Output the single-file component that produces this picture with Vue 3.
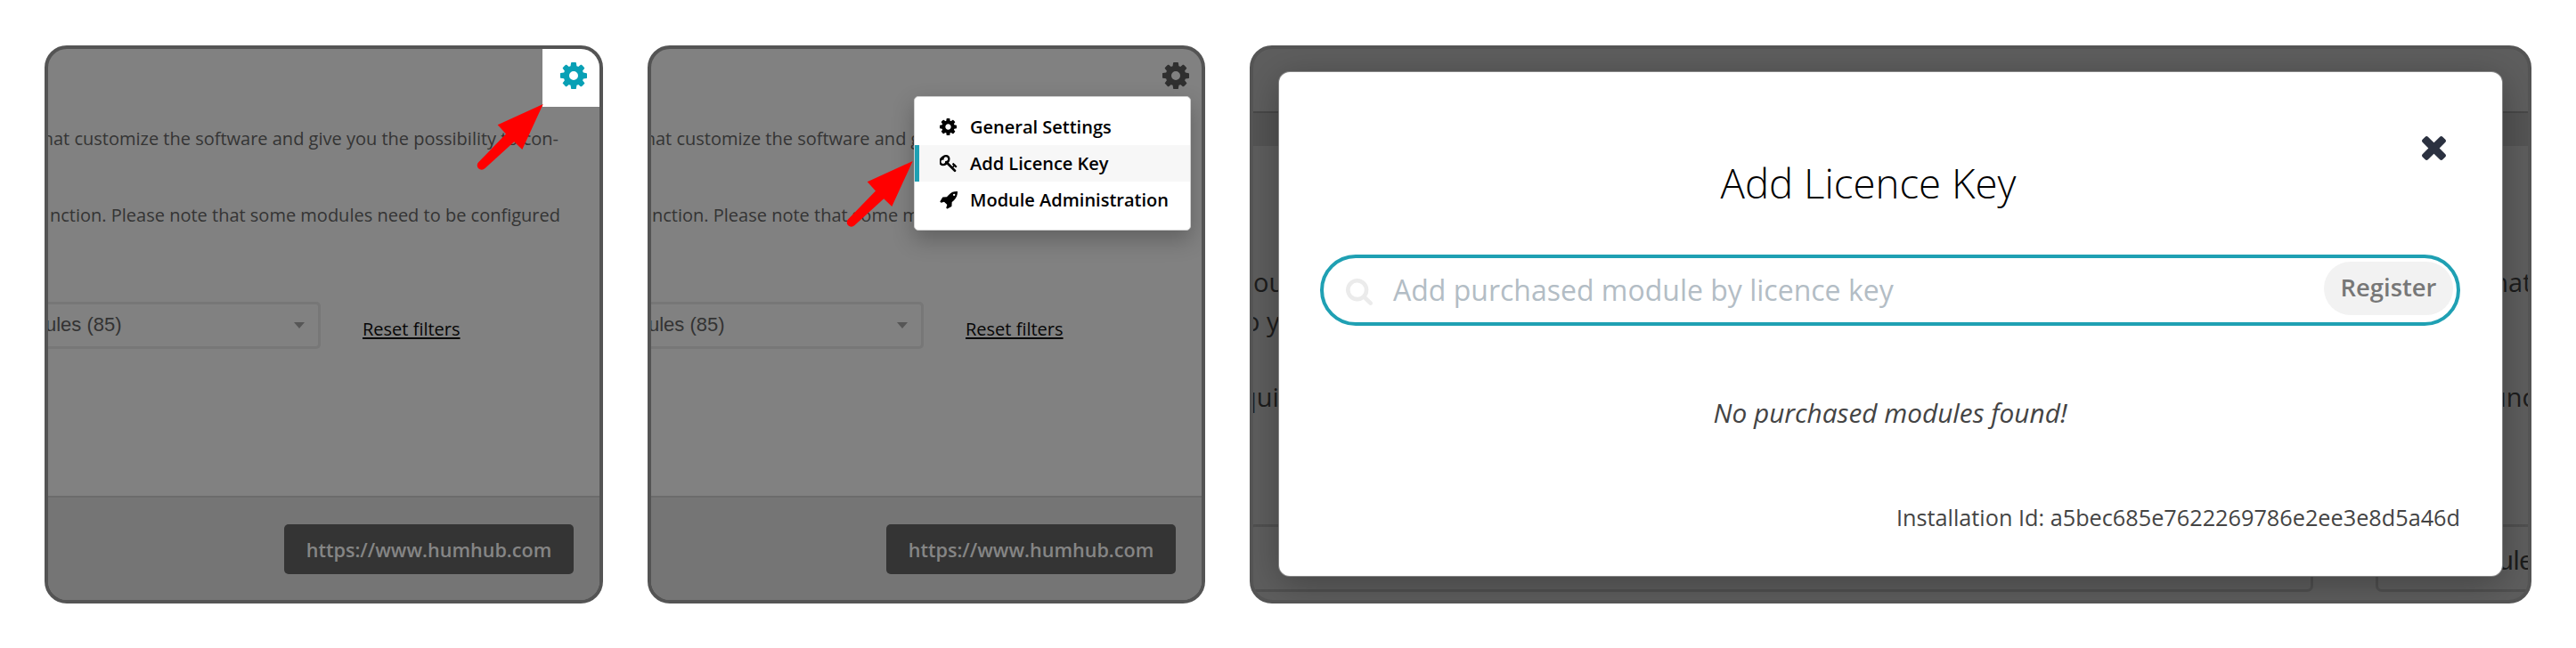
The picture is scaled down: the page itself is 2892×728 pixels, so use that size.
<script setup>
const icons = {
  cog: {
    box: '128 128 1536 1536',
    d: 'M1152 896q0-106-75-181t-181-75-181 75-75 181 75 181 181 75 181-75 75-181zm512-109v222q0 12-8 23t-20 13l-185 28q-19 54-39 91 35 50 107 138 10 12 10 25t-9 23q-27 37-99 108t-94 71q-12 0-26-9l-138-108q-44 23-91 38-16 136-29 186-7 28-36 28h-222q-14 0-24.500-8.500t-11.500-21.500l-28-184q-49-16-90-37l-141 107q-10 9-25 9-14 0-25-11-126-114-165-168-7-10-7-23 0-12 8-23 15-21 51-66.500t54-70.500q-27-50-41-99l-183-27q-13-2-21-12.500t-8-23.500v-222q0-12 8-23t19-13l186-28q14-46 39-92-40-57-107-138-10-12-10-24 0-10 9-23 26-36 98.500-107.500t94.500-71.500q13 0 26 10l138 107q44-23 91-38 16-136 29-186 7-28 36-28h222q14 0 24.500 8.500t11.500 21.500l28 184q49 16 90 37l142-107q9-9 24-9 13 0 25 10 129 119 165 170 7 8 7 22 0 12-8 23-15 21-51 66.500t-54 70.500q26 50 41 98l183 28q13 2 21 12.500t8 23.500z',
  },
  key: {
    box: '64 128 1664 1664',
    d: 'M832 512q0-80-56-136t-136-56-136 56-56 136q0 42 19 83-41-19-83-19-80 0-136 56t-56 136 56 136 136 56 136-56 56-136q0-42-19-83 41 19 83 19 80 0 136-56t56-136zm851 704q0 17-49 66t-66 49q-9 0-28.500-16t-36.500-33-38.500-40-24.500-26l-96 96 220 220q28 28 28 68 0 42-39 81t-81 39q-40 0-68-28l-671-671q-176 131-365 131-163 0-265.500-102.500t-102.500-265.500q0-160 95-313t248-248 313-95q163 0 265.500 102.500t102.500 265.500q0 189-131 365l355 355 96-96q-3-3-26-24.500t-40-38.500-33-36.500-16-28.500q0-17 49-66t66-49q13 0 23 10 6 6 46 44.500t82 79.500 86.500 86 73 78 28.500 41z',
  },
  rocket: {
    box: '0 128 1664 1664',
    d: 'M1440 448q0-40-28-68t-68-28-68 28-28 68 28 68 68 28 68-28 28-68zm224-288q0 249-75.500 430.500t-253.500 360.500q-81 80-195 176l-20 379q-2 16-16 26l-384 224q-7 4-16 4-12 0-23-9l-64-64q-13-14-8-32l85-276-281-281-276 85q-3 1-9 1-14 0-23-9l-64-64q-17-19-5-39l224-384q10-14 26-16l379-20q96-114 176-195 188-187 358-258t431-71q14 0 24 9.500t10 22.500z',
  },
  search: {
    box: '64 128 1664 1664',
    d: 'M1216 832q0-185-131.500-316.500t-316.500-131.500-316.500 131.500-131.500 316.500 131.500 316.500 316.500 131.500 316.500-131.500 131.500-316.500zm512 832q0 52-38 90t-90 38q-54 0-90-38l-343-342q-179 124-399 124-143 0-273.500-55.500t-225-150-150-225-55.500-273.500 55.500-273.500 150-225 225-150 273.500-55.500 273.500 55.500 225 150 150 225 55.500 273.500q0 220-124 399l343 343q37 37 37 90z',
  },
  times: {
    box: '302 366 1188 1188',
    d: 'M1490 1322q0 40-28 68l-136 136q-28 28-68 28t-68-28l-294-294-294 294q-28 28-68 28t-68-28l-136-136q-28-28-28-68t28-68l294-294-294-294q-28-28-28-68t28-68l136-136q28-28 68-28t68 28l294 294 294-294q28-28 68-28t68 28l136 136q28 28 28 68t-28 68l-294 294 294 294q28 28 28 68z',
  },
}

const steps = [
  { id: 'gear', menuOpen: false },
  { id: 'menu', menuOpen: true },
]

const menu = [
  { icon: 'cog', label: 'General Settings', active: false },
  { icon: 'key', label: 'Add Licence Key', active: true },
  { icon: 'rocket', label: 'Module Administration', active: false },
]
</script>

<template>
  <main class="strip">
    <section v-for="step in steps" :key="step.id" class="panel step" :class="'step-' + step.id">
      <p class="line first">hat customize the software and give you the possibility to con-</p>
      <p class="line">nction. Please note that some modules need to be configured</p>
      <div class="filters">
        <div class="select"><span>ules (85)</span><i class="caret"></i></div>
        <a class="reset">Reset filters</a>
      </div>
      <footer class="foot"><span class="url">https://www.humhub.com</span></footer>

      <div class="gearbox">
        <svg class="gear" :viewBox="icons.cog.box"><path :d="icons.cog.d" /></svg>
      </div>

      <ul v-if="step.menuOpen" class="menu">
        <li v-for="item in menu" :key="item.label" :class="{ active: item.active }">
          <svg class="mi" :class="item.icon" :viewBox="icons[item.icon].box"><path :d="icons[item.icon].d" /></svg>
          <span>{{ item.label }}</span>
        </li>
      </ul>

      <svg class="arrow" viewBox="0 0 76 76">
        <path d="M74.700 1L51.300 52L42.200 43.200L9.300 73.300A5 5 0 0 1 2.200 66.200L33 34.500L23.700 24.300Z" />
      </svg>
    </section>

    <section class="panel dialog">
      <div class="band"></div>
      <div class="peek p1"><span>ou</span><span class="r">hat</span></div>
      <div class="peek p2"><span>o y</span></div>
      <div class="peek p3"><span>qui</span><span class="r">unc</span></div>
      <div class="boxes">
        <div class="box wide"></div>
        <div class="box rest">ule</div>
      </div>

      <div class="modal">
        <div class="close">
          <svg :viewBox="icons.times.box"><path :d="icons.times.d" /></svg>
        </div>
        <h1>Add Licence Key</h1>
        <div class="field">
          <svg class="search" :viewBox="icons.search.box"><path :d="icons.search.d" /></svg>
          <span class="placeholder">Add purchased module by licence key</span>
          <span class="register">Register</span>
        </div>
        <p class="empty">No purchased modules found!</p>
        <p class="install">Installation Id: a5bec685e7622269786e2ee3e8d5a46d</p>
      </div>
    </section>
  </main>
</template>

<style>
body {
  margin: 0;
  background: #fff;
}
</style>

<style scoped>
* {
  box-sizing: border-box;
}
p,
h1,
ul {
  margin: 0;
  padding: 0;
}
.strip {
  display: flex;
  gap: 50px;
  width: 2892px;
  height: 728px;
  padding: 50.5px 0 0 50px;
  font-family: 'Open Sans', 'Noto Sans', sans-serif;
  background: #fff;
}
.panel {
  position: relative;
  flex: none;
  height: 627px;
  border: 4px solid #545454;
  border-radius: 25px;
  overflow: hidden;
}
.step {
  display: flex;
  flex-direction: column;
  width: 627px;
  background: #818181;
}
.step-menu {
  width: 626px;
}

/* dimmed page */
.line {
  display: flex;
  justify-content: flex-end;
  margin-bottom: 59px;
  padding-right: 44px;
  font-size: 20px;
  line-height: 27px;
  white-space: nowrap;
  color: #343434;
}
.line.first {
  margin-top: 87px;
  padding-right: 46px;
}
.filters {
  display: flex;
  align-items: center;
  margin-top: 25px;
}
.select {
  display: flex;
  align-items: center;
  justify-content: space-between;
  width: 311px;
  height: 53px;
  margin-left: -5px;
  padding: 0 15px 0 0;
  border: 3px solid #777;
  border-radius: 5px;
  font-family: 'Liberation Sans', Arial, sans-serif;
  font-size: 22px;
  color: #333;
}
.select span {
  margin-left: -1px;
}
.caret {
  border: 6px solid transparent;
  border-top: 7px solid #565656;
  border-bottom: 0;
}
.reset {
  margin: 8px 0 0 47px;
  font-size: 20px;
  line-height: 27px;
  color: #060606;
  text-decoration: underline;
  text-decoration-thickness: 2px;
  text-underline-offset: 2px;
}
.foot {
  display: flex;
  justify-content: flex-end;
  align-items: flex-start;
  margin-top: auto;
  height: 116.500px;
  padding: 30px 29px 0 0;
  border-top: 2px solid #6c6c6c;
  background: #757575;
}
.url {
  width: 325px;
  height: 56px;
  border-radius: 5px;
  background: #343434;
  color: #858585;
  font-size: 21.600px;
  font-weight: 600;
  line-height: 57px;
  text-align: center;
}
.gearbox {
  position: absolute;
  top: 0;
  right: 0;
  width: 64.500px;
  height: 65.500px;
  padding: 15.500px 0 0 20.500px;
}
.gear {
  display: block;
  width: 30px;
  height: 30px;
  fill: #2f2f2f;
}
.step-gear .gearbox {
  background: #fff;
}
.step-gear .gear {
  fill: #08a0b5;
}
.arrow {
  position: absolute;
  left: 481px;
  top: 61.500px;
  width: 76px;
  height: 76px;
  fill: #f00;
}
.step-menu .arrow {
  left: 219px;
  top: 125.500px;
}

/* dropdown */
.menu {
  position: absolute;
  left: 295px;
  top: 53px;
  width: 311px;
  height: 151px;
  padding: 13.500px 0;
  border-radius: 5px;
  background: #fff;
  border: 1px solid #d0d0d0;
  box-shadow: 0 10px 24px rgba(0, 0, 0, 0.25);
  list-style: none;
}
.menu li {
  display: flex;
  align-items: center;
  height: 41px;
  padding-left: 23px;
  border-left: 5px solid transparent;
  font-size: 20px;
  font-weight: 600;
  line-height: 41px;
  color: #000;
  white-space: nowrap;
}
.menu li.active {
  border-left-color: #1fa0b3;
  background: #f7f7f7;
}
.mi {
  flex: none;
  width: 20px;
  height: 20px;
  margin-right: 14px;
}
.mi.cog {
  width: 19px;
  height: 19px;
  margin-right: 15px;
}

/* dialog */
.dialog {
  width: 1438.500px;
  background: #5e5e5e;
}
.band {
  margin-top: 70.500px;
  height: 39px;
  border-top: 2px solid #484848;
  background: #545454;
}
.peek {
  display: flex;
  justify-content: space-between;
  height: 43px;
  font-size: 29px;
  line-height: 43px;
  color: #1c1c1c;
}
.p1 {
  margin-top: 131px;
}
.p1 .r {
  margin-right: -5px;
}
.p2 span {
  margin: 1px 0 0 -10px;
}
.p3 {
  margin-top: 43px;
}
.p3 span {
  margin-left: -14px;
}
.p3 .r {
  margin-right: -8px;
}
.boxes {
  display: flex;
  gap: 70px;
  margin-top: 122px;
}
.box {
  flex: none;
  height: 76px;
  border: 3px solid #505050;
  border-radius: 7px;
}
.wide {
  width: 1195px;
  margin-left: -5px;
}
.rest {
  width: 190px;
  padding-left: 135px;
  font-family: 'Liberation Sans', Arial, sans-serif;
  font-size: 30px;
  line-height: 76px;
  color: #1c1c1c;
}
.modal {
  position: absolute;
  left: 28.500px;
  top: 26.500px;
  display: flex;
  flex-direction: column;
  width: 1373px;
  height: 566px;
  padding: 0 46.500px;
  border-radius: 12px;
  background: #fff;
  box-shadow: 0 0 0 1px #858585, 0 8px 40px rgba(0, 0, 0, 0.3);
}
.close {
  display: flex;
  justify-content: flex-end;
  margin: 71.500px 16px 0 0;
}
.close svg {
  width: 27px;
  height: 27px;
  fill: #2b3140;
}
h1 {
  margin-top: -5.500px;
  padding-right: 49px;
  font-size: 45.600px;
  font-weight: 300;
  line-height: 62px;
  text-align: center;
  color: #000;
}
.field {
  display: flex;
  align-items: center;
  height: 80.500px;
  margin-top: 49.500px;
  padding: 0 4px 0 25px;
  border: 4px solid #1fa0b3;
  border-radius: 41px;
}
.search {
  width: 30px;
  height: 30px;
  margin-top: 4px;
  fill: #ebebeb;
}
.placeholder {
  flex: 1;
  margin-left: 23px;
  font-size: 32px;
  color: #b3bdc5;
}
.register {
  width: 145px;
  height: 60px;
  margin-top: -3px;
  border-radius: 30px;
  background: #f2f2f2;
  font-size: 27.400px;
  font-weight: 600;
  line-height: 57px;
  text-align: center;
  color: #777;
}
.empty {
  margin-top: 78px;
  font-size: 29.800px;
  font-style: italic;
  line-height: 40px;
  text-align: center;
  color: #444;
}
.install {
  margin-top: 80px;
  font-size: 25.250px;
  line-height: 34px;
  text-align: right;
  color: #444;
}
</style>
